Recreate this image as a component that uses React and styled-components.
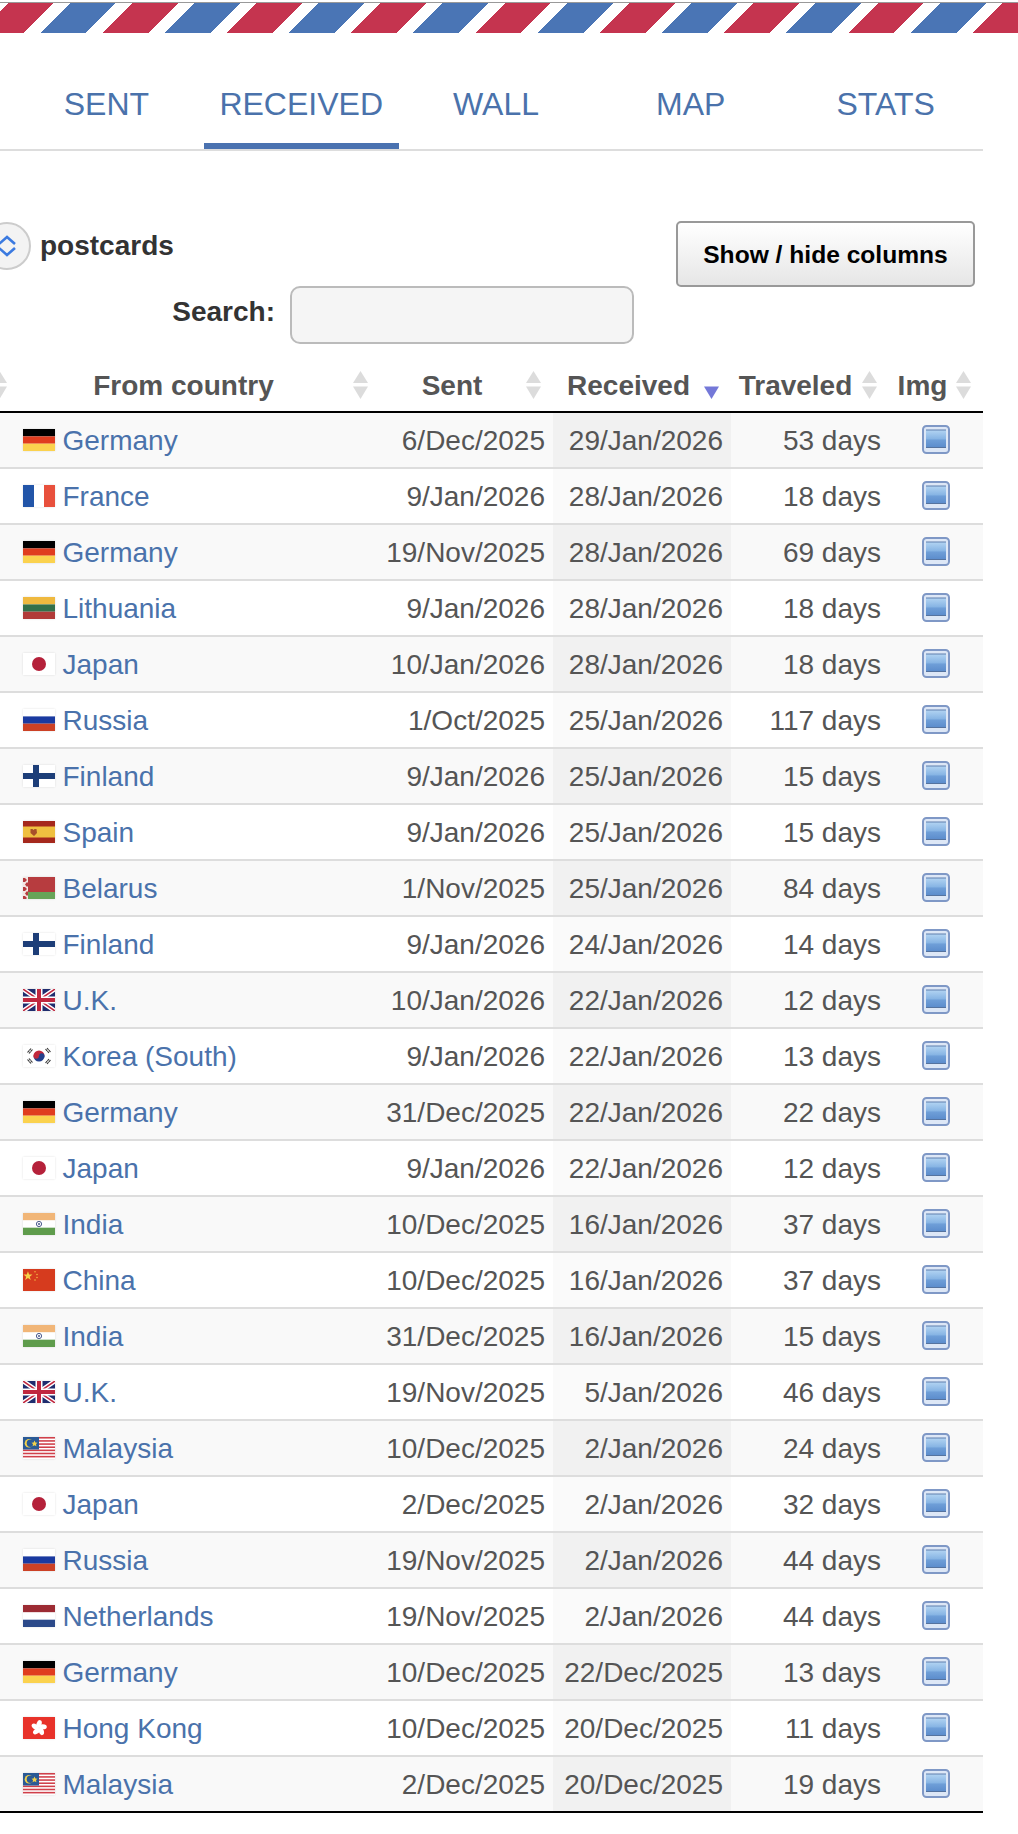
import React from 'react';
import styled, { createGlobalStyle } from 'styled-components';

const GlobalStyle = createGlobalStyle`
  html, body {
    margin: 0;
    padding: 0;
    background: #fff;
    overflow-x: hidden;
  }
  body {
    font-family: "Liberation Sans", Arial, Helvetica, sans-serif;
    color: #555;
  }
`;

const Airmail = styled.div`
  margin-top: 2px;
  height: 31px;
  border-top: 1px solid #999;
  box-sizing: border-box;
  background: repeating-linear-gradient(
    135deg,
    #fff 0,
    #fff 5.66px,
    #c5344f 5.66px,
    #c5344f 38px,
    #fff 38px,
    #fff 49.5px,
    #4a75b5 49.5px,
    #4a75b5 82px,
    #fff 82px,
    #fff 87.9px
  );
`;

const Content = styled.div`
  width: 983px;
`;

const Tabs = styled.nav`
  display: flex;
  height: 116px;
  padding-left: 9px;
  border-bottom: 2px solid #ddd;
`;

const Tab = styled.a`
  width: 195px;
  box-sizing: border-box;
  padding-top: 51px;
  text-align: center;
  font-size: 32px;
  line-height: 40px;
  color: #4a72ab;
  border-bottom: 6px solid ${(p) => (p.$active ? '#4a72b0' : 'transparent')};
`;

const Controls = styled.div`
  display: flex;
  justify-content: space-between;
  align-items: flex-start;
  padding-top: 71px;
  padding-right: 8px;
`;

const Filters = styled.div`
  width: 634px;
  display: flex;
  flex-direction: column;
  gap: 16px;
`;

const LengthRow = styled.label`
  display: flex;
  align-items: center;
  gap: 9px;
  margin-left: -17px;
  font-size: 28px;
  font-weight: 700;
  color: #333;
`;

const SelectRound = styled.span`
  width: 48px;
  height: 48px;
  box-sizing: border-box;
  border: 2px solid #ccc;
  border-radius: 50%;
  background: #f3f3f3;
  display: flex;
  align-items: center;
  justify-content: center;
`;

const SearchRow = styled.label`
  display: flex;
  align-items: center;
  justify-content: flex-end;
  gap: 15px;
  font-size: 28px;
  font-weight: 700;
  color: #333;
`;

const SearchLabel = styled.span`
  margin-top: -6px;
`;

const SearchInput = styled.input`
  width: 344px;
  height: 58px;
  box-sizing: border-box;
  border: 2px solid #bbb;
  border-radius: 10px;
  background: #f5f5f5;
  outline: none;
`;

const ColumnsButton = styled.button`
  width: 299px;
  height: 66px;
  margin-top: -1px;
  box-sizing: border-box;
  border: 2px solid #999;
  border-radius: 5px;
  background: linear-gradient(to bottom, #fff 0%, #e6e6e6 100%);
  font-family: inherit;
  font-size: 24.6px;
  font-weight: 700;
  color: #000;
  padding: 2px 0 0;
`;

const TableClip = styled.div`
  overflow: hidden;
`;

const Table = styled.table`
  width: 1004px;
  margin-left: -21px;
  table-layout: fixed;
  border-collapse: separate;
  border-spacing: 0;
`;

const Th = styled.th`
  position: relative;
  height: 51px;
  padding: 16px ${(p) => p.$pad ?? 29}px 0 0;
  box-sizing: content-box;
  border-bottom: 2px solid #000;
  font-size: 28px;
  font-weight: 700;
  color: #555;
  text-align: center;
  white-space: nowrap;
`;

const SortBox = styled.span`
  position: absolute;
  right: 11px;
  top: 27px;
  display: block;
  line-height: 0;
`;

const Row = styled.tr`
  background: ${(p) => (p.$odd ? '#f9f9f9' : '#fff')};

  td {
    border-bottom: 2px solid ${(p) => (p.$last ? '#000' : '#ddd')};
  }
`;

const Td = styled.td`
  height: 52px;
  padding: 2px 8px 0 0;
  font-size: 28px;
  line-height: 32px;
  color: #555;
  text-align: right;
  white-space: nowrap;
`;

const SortedTd = styled(Td)`
  background: ${(p) => (p.$odd ? '#f1f1f1' : '#fafafa')};
`;

const CountryTd = styled(Td)`
  padding-left: 4px;
  text-align: left;
`;

const CountryLink = styled.a`
  display: flex;
  align-items: center;
  gap: 7.5px;
  color: #4a72ab;
`;

const FlagSvg = styled.svg`
  display: block;
  flex: none;
  width: 32px;
  height: 22px;
  margin-top: -3px;
  box-shadow: 0 0 2px rgba(0, 0, 0, 0.12);
`;

const ImgTd = styled(Td)`
  padding: 2px 0 0;
  text-align: center;
`;

const ImgIcon = styled.svg`
  display: block;
  margin: -3px auto 0;
`;

const FLAGS = {
  de: (
    <>
      <rect width="32" height="7.4" fill="#000" />
      <rect y="7.4" width="32" height="7.3" fill="#e03c1f" />
      <rect y="14.7" width="32" height="7.3" fill="#fbd24e" />
    </>
  ),
  fr: (
    <>
      <rect width="32" height="22" fill="#fff" />
      <rect width="11" height="22" fill="#2255a8" />
      <rect x="21" width="11" height="22" fill="#e8503c" />
    </>
  ),
  lt: (
    <>
      <rect width="32" height="7.4" fill="#efb93f" />
      <rect y="7.4" width="32" height="7.3" fill="#33704a" />
      <rect y="14.7" width="32" height="7.3" fill="#b13a38" />
    </>
  ),
  jp: (
    <>
      <rect width="32" height="22" fill="#fff" />
      <circle cx="16" cy="11" r="7" fill="#b5213a" />
    </>
  ),
  ru: (
    <>
      <rect width="32" height="7.4" fill="#fff" />
      <rect y="7.4" width="32" height="7.3" fill="#1a3aa0" />
      <rect y="14.7" width="32" height="7.3" fill="#cc4125" />
    </>
  ),
  fi: (
    <>
      <rect width="32" height="22" fill="#fff" />
      <rect x="10" width="6" height="22" fill="#1d3e78" />
      <rect y="8" width="32" height="6" fill="#1d3e78" />
    </>
  ),
  es: (
    <>
      <rect width="32" height="22" fill="#a5281c" />
      <rect y="5.5" width="32" height="11" fill="#efc040" />
      <path d="M7.5 8h2l1 1 1-1h2l.5 4-3 3-3.500-3z" fill="#a8502a" />
    </>
  ),
  by: (
    <>
      <rect width="32" height="15" fill="#b73c3f" />
      <rect y="15" width="32" height="7" fill="#67a458" />
      <rect width="5" height="22" fill="#f3e6e2" />
      <path d="M0 1h2l2 2-2 2H0zM4 5l1 1v3l-1 1-2-2.500zM0 10h2l2 2-2 2H0zM4 14l1 1v3l-1 1-2-2.500zM0 19h2l2 2-1 1H0z" fill="#b73c3f" />
    </>
  ),
  gb: (
    <>
      <rect width="32" height="22" fill="#1f2d6e" />
      <path d="M0 0l32 22M32 0L0 22" stroke="#fff" strokeWidth="4.400" />
      <path d="M0 0l32 22M32 0L0 22" stroke="#c0283f" strokeWidth="1.500" />
      <rect x="12.500" width="7" height="22" fill="#fff" />
      <rect y="7.500" width="32" height="7" fill="#fff" />
      <rect x="14" width="4" height="22" fill="#c0283f" />
      <rect y="9" width="32" height="4" fill="#c0283f" />
    </>
  ),
  kr: (
    <>
      <rect width="32" height="22" fill="#fff" />
      <path d="M10.500 11a5.500 5.500 0 0 1 11 0z" fill="#c2283c" />
      <path d="M10.500 11a5.500 5.500 0 0 0 11 0z" fill="#24408c" />
      <circle cx="13.200" cy="11" r="2.700" fill="#c2283c" />
      <circle cx="18.800" cy="11" r="2.700" fill="#24408c" />
      <path d="M4.500 7.500l3.500-4M6 8.500l3.500-4M22.500 4l3.500 4M24 3l3.500 4M4.500 14.500l3.500 4M6 13.500l3.500 4M22.500 18l3.500-4M24 19l3.500-4" stroke="#333" strokeWidth="1.100" strokeDasharray="2.400 .5" />
    </>
  ),
  in: (
    <>
      <rect width="32" height="7.400" fill="#f1b678" />
      <rect y="7.400" width="32" height="7.300" fill="#fff" />
      <rect y="14.700" width="32" height="7.300" fill="#5f9c4c" />
      <circle cx="16" cy="11" r="2.600" fill="none" stroke="#4a5a8c" strokeWidth="1" />
      <circle cx="16" cy="11" r="1" fill="#4a5a8c" />
    </>
  ),
  cn: (
    <>
      <rect width="32" height="22" fill="#d63b1e" />
      <path d="M5.500 2.500l1.300 3.600 3.700.1-3 2.300 1.100 3.700-3.100-2.200-3.100 2.200 1.100-3.700-3-2.300 3.700-.1z" fill="#f6d24a" transform="scale(.9)" />
      <circle cx="12" cy="2.800" r=".8" fill="#f0b040" />
      <circle cx="14" cy="5.500" r=".8" fill="#f0b040" />
      <circle cx="14" cy="8.500" r=".8" fill="#f0b040" />
      <circle cx="12" cy="11" r=".8" fill="#f0b040" />
    </>
  ),
  my: (
    <>
      <rect width="32" height="22" fill="#fff" />
      {[0, 3.14, 6.28, 9.43, 12.57, 15.71, 18.86].map((y) => (
        <rect key={y} y={y} width="32" height="1.570" fill="#d0404a" />
      ))}
      <rect width="16" height="12.500" fill="#2a5a96" />
      <circle cx="6" cy="6.200" r="4.300" fill="#f3d24a" />
      <circle cx="7.400" cy="6.200" r="3.700" fill="#2a5a96" />
      <path d="M11.500 3.500l.9 1.900 2.100.3-1.500 1.400.4 2.100-1.900-1-1.900 1 .4-2.100-1.500-1.400 2.100-.3z" fill="#f3d24a" />
    </>
  ),
  hk: (
    <>
      <rect width="32" height="22" fill="#e8322a" />
      {[0, 72, 144, 216, 288].map((a) => (
        <ellipse key={a} cx="16" cy="7" rx="2.500" ry="4" fill="#fff" transform={`rotate(${a} 16 11) rotate(20 16 7)`} />
      ))}
    </>
  ),
  nl: (
    <>
      <rect width="32" height="7.400" fill="#9c2b33" />
      <rect y="7.400" width="32" height="7.300" fill="#fff" />
      <rect y="14.700" width="32" height="7.300" fill="#2c4a8a" />
    </>
  ),
};

const ROWS = [
  ['de', 'Germany', '6/Dec/2025', '29/Jan/2026', '53 days'],
  ['fr', 'France', '9/Jan/2026', '28/Jan/2026', '18 days'],
  ['de', 'Germany', '19/Nov/2025', '28/Jan/2026', '69 days'],
  ['lt', 'Lithuania', '9/Jan/2026', '28/Jan/2026', '18 days'],
  ['jp', 'Japan', '10/Jan/2026', '28/Jan/2026', '18 days'],
  ['ru', 'Russia', '1/Oct/2025', '25/Jan/2026', '117 days'],
  ['fi', 'Finland', '9/Jan/2026', '25/Jan/2026', '15 days'],
  ['es', 'Spain', '9/Jan/2026', '25/Jan/2026', '15 days'],
  ['by', 'Belarus', '1/Nov/2025', '25/Jan/2026', '84 days'],
  ['fi', 'Finland', '9/Jan/2026', '24/Jan/2026', '14 days'],
  ['gb', 'U.K.', '10/Jan/2026', '22/Jan/2026', '12 days'],
  ['kr', 'Korea (South)', '9/Jan/2026', '22/Jan/2026', '13 days'],
  ['de', 'Germany', '31/Dec/2025', '22/Jan/2026', '22 days'],
  ['jp', 'Japan', '9/Jan/2026', '22/Jan/2026', '12 days'],
  ['in', 'India', '10/Dec/2025', '16/Jan/2026', '37 days'],
  ['cn', 'China', '10/Dec/2025', '16/Jan/2026', '37 days'],
  ['in', 'India', '31/Dec/2025', '16/Jan/2026', '15 days'],
  ['gb', 'U.K.', '19/Nov/2025', '5/Jan/2026', '46 days'],
  ['my', 'Malaysia', '10/Dec/2025', '2/Jan/2026', '24 days'],
  ['jp', 'Japan', '2/Dec/2025', '2/Jan/2026', '32 days'],
  ['ru', 'Russia', '19/Nov/2025', '2/Jan/2026', '44 days'],
  ['nl', 'Netherlands', '19/Nov/2025', '2/Jan/2026', '44 days'],
  ['de', 'Germany', '10/Dec/2025', '22/Dec/2025', '13 days'],
  ['hk', 'Hong Kong', '10/Dec/2025', '20/Dec/2025', '11 days'],
  ['my', 'Malaysia', '2/Dec/2025', '20/Dec/2025', '19 days'],
];

const TABS = ['SENT', 'RECEIVED', 'WALL', 'MAP', 'STATS'];

const SortArrows = ({ active }) => (
  <svg width="17" height="28" viewBox="0 0 17 28">
    {!active && <path d="M8.500 0L16 12H1z" fill="#dcdcdc" />}
    <path d="M8.500 28L16 15.500H1z" fill={active ? '#7478d8' : '#dcdcdc'} />
  </svg>
);

const Flag = ({ code }) => (
  <FlagSvg viewBox="0 0 32 22">{FLAGS[code]}</FlagSvg>
);

const PictureIcon = ({ id }) => (
  <ImgIcon width="28" height="29" viewBox="0 0 28 29">
    <defs>
      <linearGradient id={id} x1="0" y1="0" x2="0" y2="1">
        <stop offset="0" stopColor="#b3d4f2" />
        <stop offset="0.5" stopColor="#86b4e4" />
        <stop offset="0.55" stopColor="#6f9fd8" />
        <stop offset="1" stopColor="#5a8bcb" />
      </linearGradient>
    </defs>
    <rect x="1" y="1" width="26" height="27" rx="3.500" fill="#dde7f6" stroke="#7f98c6" strokeWidth="2" />
    <rect x="4" y="5" width="20" height="18" fill={`url(#${id})`} />
    <path d="M4 5h20" stroke="#5f7fae" strokeWidth="1" />
    <path d="M4 22.500h20" stroke="#55739f" strokeWidth="1" />
  </ImgIcon>
);

const App = () => {
  return (
    <>
      <GlobalStyle />
      <Airmail />
      <Content>
        <Tabs>
          {TABS.map((tab) => (
            <Tab key={tab} $active={tab === 'RECEIVED'}>{tab}</Tab>
          ))}
        </Tabs>

        <Controls>
          <Filters>
            <LengthRow>
              <SelectRound>
                <svg width="20" height="22" viewBox="0 0 20 22" fill="none" stroke="#3b7ae0" strokeWidth="2.600">
                  <path d="M2 9l8-7 8 7" />
                  <path d="M2 13l8 7 8-7" />
                </svg>
              </SelectRound>
              postcards
            </LengthRow>
            <SearchRow>
              <SearchLabel>Search:</SearchLabel>
              <SearchInput type="text" />
            </SearchRow>
          </Filters>
          <ColumnsButton>Show / hide columns</ColumnsButton>
        </Controls>

        <TableClip>
          <Table>
            <colgroup>
              <col width="40" />
              <col width="361" />
              <col width="173" />
              <col width="178" />
              <col width="158" />
              <col width="94" />
            </colgroup>
            <thead>
              <tr>
                <Th><SortBox><SortArrows /></SortBox></Th>
                <Th $pad={32}>From country<SortBox><SortArrows /></SortBox></Th>
                <Th>Sent<SortBox><SortArrows /></SortBox></Th>
                <Th $pad={27}>Received<SortBox><SortArrows active /></SortBox></Th>
                <Th>Traveled<SortBox><SortArrows /></SortBox></Th>
                <Th $pad={27}>Img<SortBox><SortArrows /></SortBox></Th>
              </tr>
            </thead>
            <tbody>
              {ROWS.map(([code, country, sent, received, traveled], i) => (
                <Row key={i} $odd={i % 2 === 0} $last={i === ROWS.length - 1}>
                  <Td />
                  <CountryTd>
                    <CountryLink>
                      <Flag code={code} />
                      {country}
                    </CountryLink>
                  </CountryTd>
                  <Td>{sent}</Td>
                  <SortedTd $odd={i % 2 === 0}>{received}</SortedTd>
                  <Td>{traveled}</Td>
                  <ImgTd><PictureIcon id={`pic${i}`} /></ImgTd>
                </Row>
              ))}
            </tbody>
          </Table>
        </TableClip>
      </Content>
    </>
  );
};

export default App;
